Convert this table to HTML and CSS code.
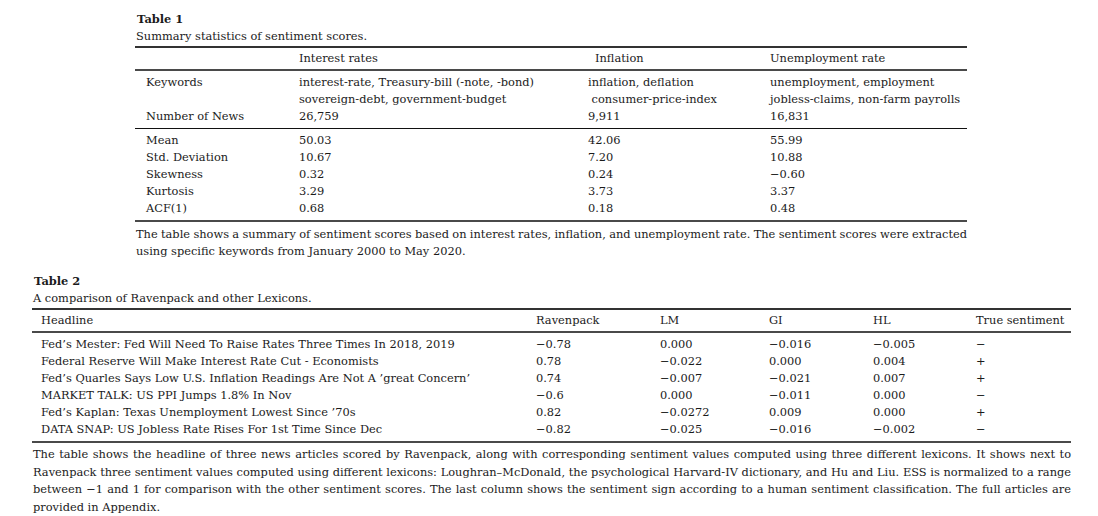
FILE: index.html
```html
<!DOCTYPE html>
<html lang="en">
<head>
<meta charset="utf-8">
<title>Tables</title>
<link rel="stylesheet" href="styles.css">
</head>
<body>
<div class="page">
  <section class="tbl tbl1">
    <div class="tlabel">Table 1</div>
    <div class="ttitle">Summary statistics of sentiment scores.</div>
    <table class="grid g1">
      <colgroup>
        <col class="c1a"><col class="c1b"><col class="c1c"><col>
      </colgroup>
      <thead>
        <tr>
          <th></th>
          <th>Interest rates</th>
          <th class="ind">Inflation</th>
          <th>Unemployment rate</th>
        </tr>
      </thead>
      <tbody class="grp">
        <tr class="first">
          <td>Keywords</td>
          <td>interest-rate, Treasury-bill (-note, -bond)<br>sovereign-debt, government-budget</td>
          <td>inflation, deflation<br>&nbsp;consumer-price-index</td>
          <td>unemployment, employment<br>jobless-claims, non-farm payrolls</td>
        </tr>
        <tr class="last">
          <td>Number of News</td>
          <td>26,759</td>
          <td>9,911</td>
          <td>16,831</td>
        </tr>
      </tbody>
      <tbody class="grp end">
        <tr class="first"><td>Mean</td><td>50.03</td><td>42.06</td><td>55.99</td></tr>
        <tr><td>Std. Deviation</td><td>10.67</td><td>7.20</td><td>10.88</td></tr>
        <tr><td>Skewness</td><td>0.32</td><td>0.24</td><td>−0.60</td></tr>
        <tr><td>Kurtosis</td><td>3.29</td><td>3.73</td><td>3.37</td></tr>
        <tr class="last"><td>ACF(1)</td><td>0.68</td><td>0.18</td><td>0.48</td></tr>
      </tbody>
    </table>
    <div class="note n1">
      <span class="jl">The table shows a summary of sentiment scores based on interest rates, inflation, and unemployment rate. The sentiment scores were extracted</span>
      <span class="ll">using specific keywords from January 2000 to May 2020.</span>
    </div>
  </section>

  <section class="tbl tbl2">
    <div class="tlabel">Table 2</div>
    <div class="ttitle">A comparison of Ravenpack and other Lexicons.</div>
    <table class="grid g2">
      <colgroup>
        <col class="c2a"><col class="c2b"><col class="c2c"><col class="c2d"><col class="c2e"><col>
      </colgroup>
      <thead>
        <tr>
          <th>Headline</th>
          <th>Ravenpack</th>
          <th>LM</th>
          <th>GI</th>
          <th>HL</th>
          <th>True sentiment</th>
        </tr>
      </thead>
      <tbody class="grp end">
        <tr class="first"><td>Fed’s Mester: Fed Will Need To Raise Rates Three Times In 2018, 2019</td><td>−0.78</td><td>0.000</td><td>−0.016</td><td>−0.005</td><td>−</td></tr>
        <tr><td>Federal Reserve Will Make Interest Rate Cut - Economists</td><td>0.78</td><td>−0.022</td><td>0.000</td><td>0.004</td><td>+</td></tr>
        <tr><td>Fed’s Quarles Says Low U.S. Inflation Readings Are Not A ’great Concern’</td><td>0.74</td><td>−0.007</td><td>−0.021</td><td>0.007</td><td>+</td></tr>
        <tr><td>MARKET TALK: US PPI Jumps 1.8% In Nov</td><td>−0.6</td><td>0.000</td><td>−0.011</td><td>0.000</td><td>−</td></tr>
        <tr><td>Fed’s Kaplan: Texas Unemployment Lowest Since ’70s</td><td>0.82</td><td>−0.0272</td><td>0.009</td><td>0.000</td><td>+</td></tr>
        <tr class="last"><td>DATA SNAP: US Jobless Rate Rises For 1st Time Since Dec</td><td>−0.82</td><td>−0.025</td><td>−0.016</td><td>−0.002</td><td>−</td></tr>
      </tbody>
    </table>
    <div class="note n2">
      <span class="jl">The table shows the headline of three news articles scored by Ravenpack, along with corresponding sentiment values computed using three different lexicons. It shows next to</span>
      <span class="jl">Ravenpack three sentiment values computed using different lexicons: Loughran–McDonald, the psychological Harvard-IV dictionary, and Hu and Liu. ESS is normalized to a range</span>
      <span class="jl">between −1 and 1 for comparison with the other sentiment scores. The last column shows the sentiment sign according to a human sentiment classification. The full articles are</span>
      <span class="ll">provided in Appendix.</span>
    </div>
  </section>
</div>
</body>
</html>
```

FILE: styles.css
```css
html, body {
  margin: 0;
  padding: 0;
  background: #ffffff;
}

body {
  font-family: "DejaVu Serif", "Liberation Serif", serif;
  font-size: 11.4px;
  line-height: 17px;
  color: #1b1b1b;
}

.page {
  padding-top: 11px;
}

.tbl1 {
  margin-left: 135px;
  width: 832px;
}

.tbl2 {
  margin-left: 32px;
  width: 1039px;
  margin-top: 13px;
}

.tlabel {
  font-weight: bold;
  padding-left: 2px;
}

.ttitle {
  padding-left: 1px;
  margin-bottom: 1px;
}

.grid {
  width: 100%;
  border-collapse: collapse;
  table-layout: fixed;
}

.grid th,
.grid td {
  padding: 0;
  text-align: left;
  font-weight: normal;
  vertical-align: top;
  white-space: nowrap;
}

.grid thead th {
  border-top: 2px solid #333333;
  border-bottom: 2px solid #4a4a4a;
  padding-top: 2px;
  padding-bottom: 2px;
}

.grid tbody.grp tr.first td {
  padding-top: 3px;
}

.grid tbody.grp tr.last td {
  padding-bottom: 3px;
  border-bottom: 1px solid #111111;
}

.grid tbody.grp.end tr.last td {
  border-bottom: 2px solid #4a4a4a;
}

.g1 th:first-child,
.g1 td:first-child {
  padding-left: 11px;
}

.g1 .c1a { width: 164px; }
.g1 .c1b { width: 289px; }
.g1 .c1c { width: 182px; }

.g1 th.ind {
  padding-left: 7px;
}

.g2 th:first-child,
.g2 td:first-child {
  padding-left: 9px;
}

.g2 .c2a { width: 504px; }
.g2 .c2b { width: 124px; }
.g2 .c2c { width: 109px; }
.g2 .c2d { width: 104px; }
.g2 .c2e { width: 103px; }

.note {
  padding-top: 4px;
  padding-left: 1px;
}

.n1 .jl {
  word-spacing: -2px;
}

.n2 {
  padding-top: 3px;
  line-height: 17.5px;
}

.note .jl {
  display: block;
  text-align: justify;
  text-align-last: justify;
}

.note .ll {
  display: block;
}
```
